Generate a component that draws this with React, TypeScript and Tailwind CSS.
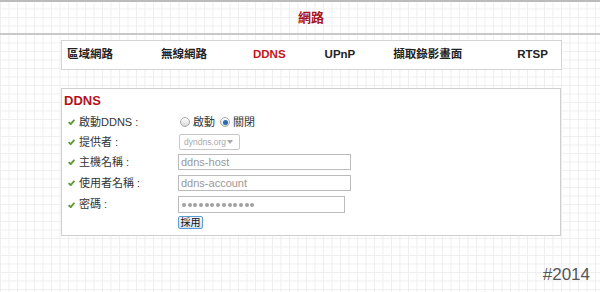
import type { ReactNode } from "react";

const NAV_ITEMS = [
  { label: "區域網路", ml: "ml-[5px]" },
  { label: "無線網路", ml: "ml-[48px]" },
  { label: "DDNS", ml: "ml-[46px]", active: true },
  { label: "UPnP", ml: "ml-[39px]" },
  { label: "擷取錄影畫面", ml: "ml-[38px]" },
  { label: "RTSP", ml: "ml-[55px]" },
];

function Check() {
  return (
    <svg width="7" height="6" viewBox="0 0 7 6" className="mr-[4px] shrink-0">
      <path d="M0.6 3.1 L2.7 5.2 L6.4 0.8" fill="none" stroke="#5c9b2f" strokeWidth="1.8" />
    </svg>
  );
}

function Row({ label, height, children }: { label: string; height: string; children: ReactNode }) {
  return (
    <div className={`flex items-center ${height}`}>
      <div className="flex w-[116px] items-center pl-[6px] text-[11px] text-[#333]">
        <Check />
        <span>{label}</span>
      </div>
      {children}
    </div>
  );
}

function Radio({ checked }: { checked?: boolean }) {
  return (
    <span className="flex h-[10px] w-[10px] items-center justify-center rounded-full border border-[#aaa] bg-[linear-gradient(#fff,#d8d8d8)]">
      {checked ? <span className="h-[5px] w-[5px] rounded-full bg-[#2a6ab5]" /> : null}
    </span>
  );
}

export default function App() {
  return (
    <div className="relative h-[292px] w-[600px] overflow-hidden bg-white bg-[linear-gradient(to_right,#eeeeee_1px,transparent_1px),linear-gradient(to_bottom,#eeeeee_1px,transparent_1px)] bg-[size:8.5px_8.5px] font-['Liberation_Sans','Noto_Sans_CJK_TC',sans-serif]">
      <header className="flex h-[35px] items-center justify-center border-t-2 border-b-2 border-t-[#bbb] border-b-[#c8c8c8] pl-[22px]">
        <h1 className="text-[13px] font-bold text-[#a8141b]">網路</h1>
      </header>

      <nav className="ml-[61px] mt-[5px] flex h-[30px] w-[501px] items-center border border-[#d4d4d4] bg-white text-[11.5px] font-bold text-[#222]">
        {NAV_ITEMS.map((item) => (
          <span key={item.label} className={`${item.ml} ${item.active ? "text-[#c4161c]" : ""}`}>
            {item.label}
          </span>
        ))}
      </nav>

      <section className="ml-[61px] mt-[18px] w-[500px] border border-[#cfcfcf] bg-white pb-[6px]">
        <h2 className="flex h-[23px] items-center pl-[2px] text-[13px] font-bold text-[#b3121a]">DDNS</h2>

        <Row label="啟動DDNS :" height="h-[20px]">
          <div className="flex items-center text-[11px] text-[#333]">
            <span className="ml-[2px]"><Radio /></span>
            <span className="ml-[3px]">啟動</span>
            <span className="ml-[5px]"><Radio checked /></span>
            <span className="ml-[3px]">關閉</span>
          </div>
        </Row>

        <Row label="提供者 :" height="h-[20px]">
          <div className="ml-[1px] flex h-[16px] w-[61px] items-center justify-between rounded-[2px] border border-[#c8c8c8] pl-[4px] pr-[6px] text-[8.5px] text-[#aaa]">
            <span className="whitespace-nowrap">dyndns.org</span>
            <svg width="6" height="4" viewBox="0 0 6 4" className="shrink-0">
              <path d="M0 0 H6 L3 4 Z" fill="#aaa" />
            </svg>
          </div>
        </Row>

        <Row label="主機名稱 :" height="h-[20px]">
          <div className="flex h-[16px] w-[173px] items-center border border-[#bbb] pl-[2px] text-[11px] text-[#999]">ddns-host</div>
        </Row>

        <Row label="使用者名稱 :" height="h-[22px]">
          <div className="flex h-[16px] w-[173px] items-center border border-[#bbb] pl-[2px] text-[11px] text-[#999]">ddns-account</div>
        </Row>

        <Row label="密碼 :" height="h-[21px]">
          <div className="flex h-[17px] w-[167px] items-center gap-[1.7px] border border-[#bbb] pl-[3px]">
            {Array.from({ length: 13 }).map((_, i) => (
              <span key={i} className="h-[4px] w-[4px] rounded-full bg-[#a0a0a0]" />
            ))}
          </div>
        </Row>

        <div className="mt-[1px] flex pl-[116px]">
          <button
            type="button"
            className="flex h-[13px] w-[25px] items-center justify-center rounded-[2px] border border-[#5b9bd5] bg-[linear-gradient(#f4f8fc,#cfe0f0)] text-[10px] leading-none text-[#111]"
          >
            採用
          </button>
        </div>
      </section>

      <div className="mt-[26px] flex justify-end pr-[10px] text-[17px] text-[#555]">#2014</div>
    </div>
  );
}
